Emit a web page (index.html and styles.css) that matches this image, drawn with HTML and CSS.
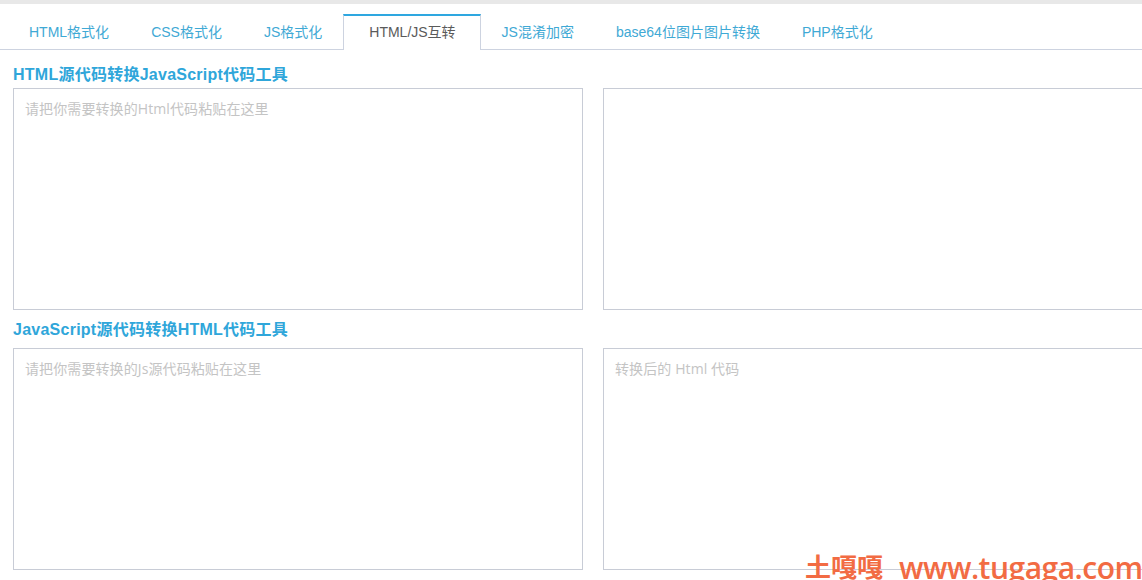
FILE: index.html
```html
<!DOCTYPE html>
<html lang="zh-CN">
<head>
<meta charset="utf-8">
<title>HTML/JS互转</title>
<link rel="stylesheet" href="styles.css">
</head>
<body>
<div class="page">
  <nav class="tabs">
    <a class="tab">HTML格式化</a>
    <a class="tab">CSS格式化</a>
    <a class="tab">JS格式化</a>
    <a class="tab active">HTML/JS互转</a>
    <a class="tab">JS混淆加密</a>
    <a class="tab">base64位图片图片转换</a>
    <a class="tab">PHP格式化</a>
  </nav>
  <section class="tool">
    <h2 class="title">HTML源代码转换JavaScript代码工具</h2>
    <div class="panes">
      <textarea class="pane" placeholder="请把你需要转换的Html代码粘贴在这里"></textarea>
      <textarea class="pane"></textarea>
    </div>
  </section>
  <section class="tool">
    <h2 class="title">JavaScript源代码转换HTML代码工具</h2>
    <div class="panes">
      <textarea class="pane" placeholder="请把你需要转换的Js源代码粘贴在这里"></textarea>
      <textarea class="pane" placeholder="转换后的 Html 代码"></textarea>
    </div>
  </section>
</div>
<div class="watermark"><span class="wm-cn">土嘎嘎</span><span class="wm-url">www.tugaga.com</span></div>
</body>
</html>
```
FILE: styles.css
```css
* { box-sizing: border-box; }
html, body { margin: 0; height: 100%; overflow: hidden; background: #fff; }
body { font-family: "Liberation Sans", "Noto Sans CJK SC", sans-serif; position: relative; }
.page { border-top: 4px solid #e8e8e8; width: 1300px; }
.tabs { display: flex; height: 36px; margin-top: 10px; border-bottom: 1px solid #cdd3e0; width: 1142px; padding-left: 8px; }
.tab { display: block; flex: none; padding: 2px 21px 0; height: 36px; line-height: 32px; font-size: 14px; color: #3fa9d5; white-space: nowrap; }
.tab.active { padding: 0 24px 0 25px; border: 1px solid #cdd3e0; border-top: 2px solid #2ea7e0; border-bottom: 0; background: #fff; color: #5a5a5a; }
.tool { padding-left: 13px; }
.title { margin: 0; height: 38px; line-height: 50px; font-size: 16px; letter-spacing: 0.25px; font-weight: bold; color: #2fa6da; white-space: nowrap; }
.tool + .tool .title { line-height: 40px; }
.panes { display: flex; gap: 20px; }
.pane { display: block; width: 570px; height: 222px; flex: none; margin: 0; padding: 11px; border: 1px solid #c8ccd6; border-radius: 0; outline: 0; resize: none; font: 14px/18px "Open Sans", "Noto Sans CJK SC", sans-serif; letter-spacing: 0.1px; background: #fff; }
.pane::placeholder { color: #c4c4c4; opacity: 1; }
.watermark { position: absolute; left: 805px; top: 550px; display: flex; gap: 16px; white-space: nowrap; font-weight: bold; color: #f26b43; line-height: 36px; }
.wm-cn { font-size: 26px; }
.wm-url { font-size: 30px; font-weight: 600; letter-spacing: -0.5px; font-family: "Open Sans", "Liberation Sans", sans-serif; }
```
